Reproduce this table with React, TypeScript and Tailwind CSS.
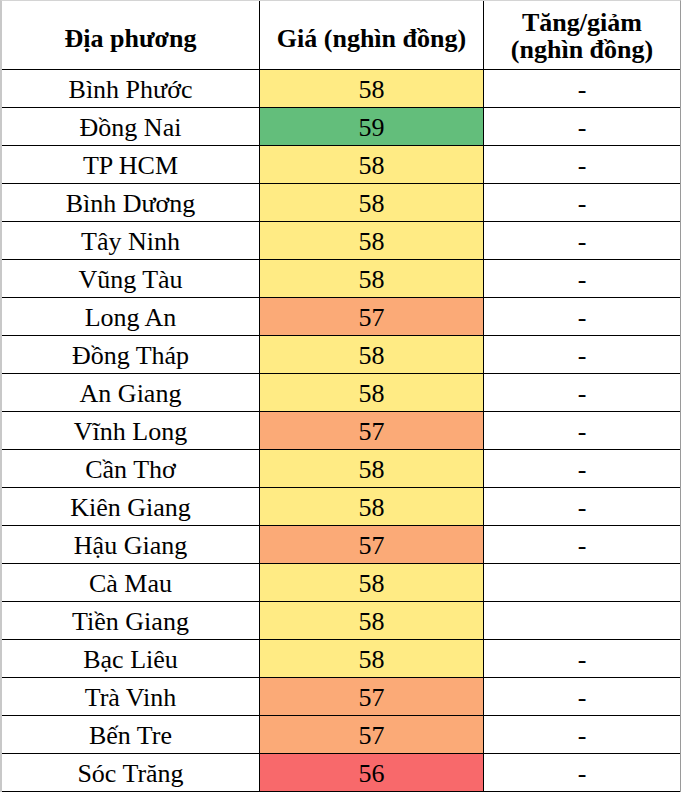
import React from "react";

type Row = { name: string; price: number; change: string };

const rows: Row[] = [
  { name: "Bình Phước", price: 58, change: "-" },
  { name: "Đồng Nai", price: 59, change: "-" },
  { name: "TP HCM", price: 58, change: "-" },
  { name: "Bình Dương", price: 58, change: "-" },
  { name: "Tây Ninh", price: 58, change: "-" },
  { name: "Vũng Tàu", price: 58, change: "-" },
  { name: "Long An", price: 57, change: "-" },
  { name: "Đồng Tháp", price: 58, change: "-" },
  { name: "An Giang", price: 58, change: "-" },
  { name: "Vĩnh Long", price: 57, change: "-" },
  { name: "Cần Thơ", price: 58, change: "-" },
  { name: "Kiên Giang", price: 58, change: "-" },
  { name: "Hậu Giang", price: 57, change: "-" },
  { name: "Cà Mau", price: 58, change: "" },
  { name: "Tiền Giang", price: 58, change: "" },
  { name: "Bạc Liêu", price: 58, change: "-" },
  { name: "Trà Vinh", price: 57, change: "-" },
  { name: "Bến Tre", price: 57, change: "-" },
  { name: "Sóc Trăng", price: 56, change: "-" },
];

const bgFor = (p: number) => {
  if (p === 59) return "bg-[#63be7b]";
  if (p === 58) return "bg-[#ffeb84]";
  if (p === 57) return "bg-[#fbaa77]";
  return "bg-[#f8696b]";
};

export default function App() {
  return (
    <div className="w-[681px] h-[792px] bg-white border-l-2 border-t border-r border-l-[#c8c8c8] border-t-[#d4d4d4] border-r-[#9a9a9a] text-black overflow-hidden font-['Liberation_Serif']">
      <div className="flex h-[69px] border-b border-black font-bold text-[26px] leading-[27px]">
        <div className="w-[258px] border-r border-black flex items-center justify-center pt-[6px]">
          Địa phương
        </div>
        <div className="w-[224px] border-r border-black flex items-center justify-center pt-[6px]">
          Giá (nghìn đồng)
        </div>
        <div className="flex-1 flex flex-col items-center justify-center text-center pt-[1px]">
          <div>Tăng/giảm</div>
          <div>(nghìn đồng)</div>
        </div>
      </div>
      {rows.map((r) => (
        <div key={r.name} className="flex h-[38px] border-b border-black text-[26px] leading-none">
          <div className="w-[258px] border-r border-black flex items-center justify-center pt-[2px]">
            {r.name}
          </div>
          <div className={`w-[224px] border-r border-black flex items-center justify-center pt-[2px] ${bgFor(r.price)}`}>
            {r.price}
          </div>
          <div className="flex-1 flex items-center justify-center pt-[2px]">{r.change}</div>
        </div>
      ))}
    </div>
  );
}
